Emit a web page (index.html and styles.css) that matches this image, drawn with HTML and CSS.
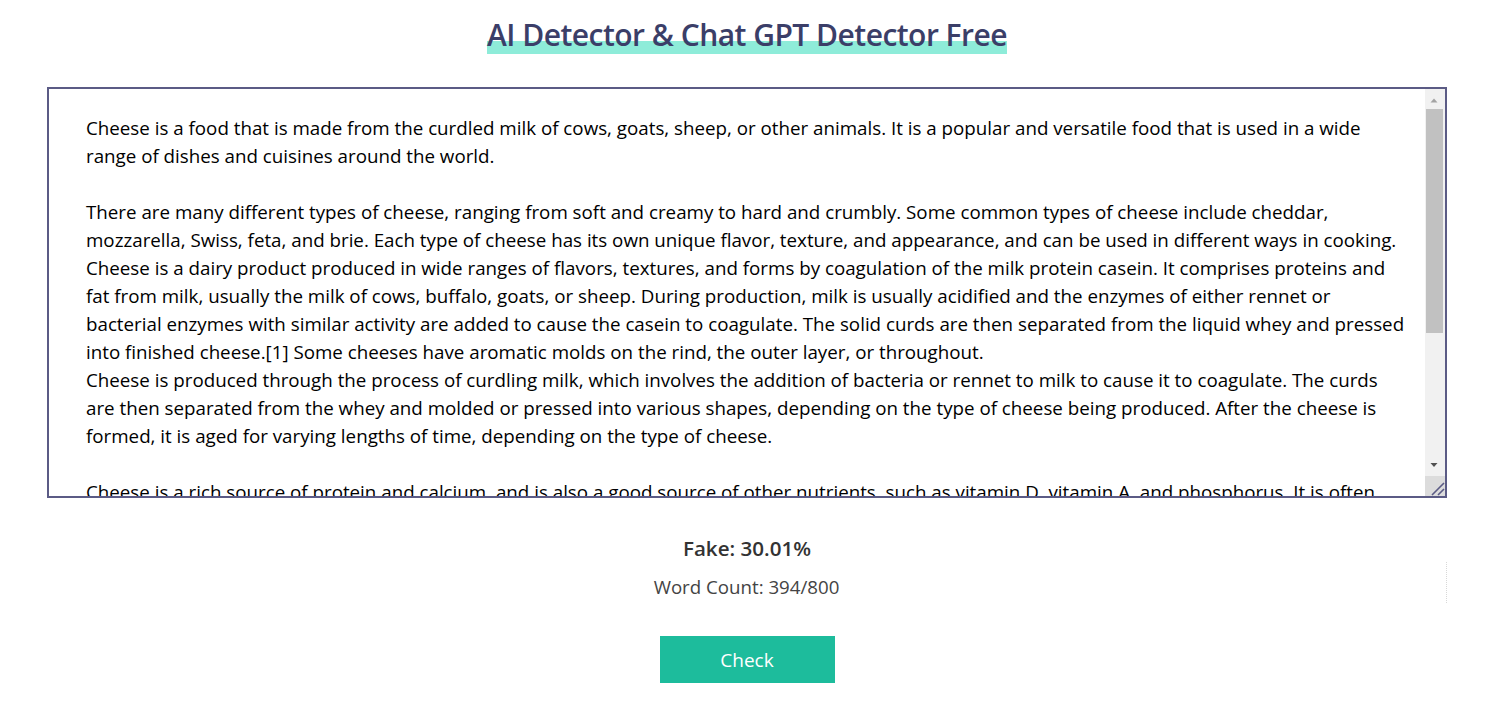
FILE: index.html
```html
<!DOCTYPE html>
<html lang="en">
<head>
<meta charset="utf-8">
<title>AI Detector &amp; Chat GPT Detector Free</title>
<link rel="stylesheet" href="styles.css">
</head>
<body>
<main class="page">
  <h1 class="title"><span class="title-mark">AI Detector &amp; Chat GPT Detector Free</span></h1>
  <div class="editor">
    <textarea class="input" spellcheck="false">Cheese is a food that is made from the curdled milk of cows, goats, sheep, or other animals. It is a popular and versatile food that is used in a wide range of dishes and cuisines around the world.

There are many different types of cheese, ranging from soft and creamy to hard and crumbly. Some common types of cheese include cheddar, mozzarella, Swiss, feta, and brie. Each type of cheese has its own unique flavor, texture, and appearance, and can be used in different ways in cooking.
Cheese is a dairy product produced in wide ranges of flavors, textures, and forms by coagulation of the milk protein casein. It comprises proteins and fat from milk, usually the milk of cows, buffalo, goats, or sheep. During production, milk is usually acidified and the enzymes of either rennet or bacterial enzymes with similar activity are added to cause the casein to coagulate. The solid curds are then separated from the liquid whey and pressed into finished cheese.[1] Some cheeses have aromatic molds on the rind, the outer layer, or throughout.
Cheese is produced through the process of curdling milk, which involves the addition of bacteria or rennet to milk to cause it to coagulate. The curds are then separated from the whey and molded or pressed into various shapes, depending on the type of cheese being produced. After the cheese is formed, it is aged for varying lengths of time, depending on the type of cheese.

Cheese is a rich source of protein and calcium, and is also a good source of other nutrients, such as vitamin D, vitamin A, and phosphorus. It is often used as a topping or ingredient in many dishes, including pizza, pasta, sandwiches, and salads, and it can also be enjoyed on its own, paired with crackers, fruit, or wine.

There are many ways to enjoy cheese, and it can be a delicious and nutritious addition to a balanced diet. However, it is important to consume cheese in moderation, as it can be high in saturated fat and sodium.

Overall, cheese is a delicious and versatile food that is enjoyed by people all over the world.</textarea>
    <div class="scrollbar" aria-hidden="true">
      <div class="sb-btn">
        <svg width="20" height="20" viewBox="0 0 20 20"><polygon points="5.5,13.5 9,9.5 12.5,13.5" fill="#a3a3a3"/></svg>
      </div>
      <div class="sb-track"><div class="sb-thumb"></div></div>
      <div class="sb-btn">
        <svg width="20" height="20" viewBox="0 0 20 20"><polygon points="5.5,7 12.5,7 9,11" fill="#505050"/></svg>
      </div>
      <div class="sb-corner">
        <svg width="20" height="20" viewBox="0 0 20 20"><path d="M7 19 L19 7 M13 19 L19 13" stroke="#5b5b85" stroke-width="1.6" fill="none"/></svg>
      </div>
    </div>
  </div>
  <section class="result">
    <p class="score">Fake: 30.01%</p>
    <div class="count-row"><p class="count">Word Count: 394/800</p></div>
    <button class="check" type="button">Check</button>
  </section>
</main>
</body>
</html>
```
FILE: styles.css
```css
html, body {
  margin: 0;
  padding: 0;
  background: #fff;
}
body {
  font-family: "Open Sans", "Liberation Sans", sans-serif;
  color: #000;
}
.page {
  width: 1400px;
  margin-left: calc(50% - 702px);
  padding-top: 14px;
  display: flex;
  flex-direction: column;
  align-items: center;
}
.title {
  margin: 0 0 31px;
  font-size: 30px;
  font-weight: 600;
  letter-spacing: -0.52px;
  line-height: 42px;
  color: #3b3e68;
}
.title-mark {
  background: linear-gradient(to bottom, transparent 0, transparent 66%, #8eecd9 66%, #8eecd9 97%, transparent 97%);
}
.editor {
  position: relative;
  width: 1400px;
  height: 411px;
}
.input {
  box-sizing: border-box;
  width: 100%;
  height: 100%;
  border: 2px solid #5b5b85;
  border-radius: 0;
  padding: 25px 35px 25px 37px;
  font-family: "Open Sans", "Liberation Sans", sans-serif;
  font-size: 18.75px;
  line-height: 28px;
  color: #000;
  outline: none;
  resize: none;
  margin: 0;
  display: block;
  scrollbar-width: none;
}
.input::-webkit-scrollbar {
  display: none;
}
.scrollbar {
  position: absolute;
  top: 2px;
  right: 2px;
  bottom: 2px;
  width: 20px;
  display: flex;
  flex-direction: column;
  background: #f1f1f1;
}
.sb-btn,
.sb-corner {
  height: 20px;
  flex: none;
}
.sb-btn svg,
.sb-corner svg {
  display: block;
}
.sb-track {
  flex: 1;
  display: flex;
  flex-direction: column;
}
.sb-thumb {
  height: 224px;
  margin: 0 2px 0 1px;
  background: #c1c1c1;
}
.sb-corner {
  background: #dcdcdc;
}
.result {
  width: 1400px;
  display: flex;
  flex-direction: column;
  align-items: center;
}
.score {
  margin: 36px 0 0;
  font-size: 20.6px;
  font-weight: 600;
  line-height: 28px;
  color: #333;
}
.count-row {
  width: 100%;
  display: flex;
  justify-content: center;
  border-right: 1px dotted #d8d8d8;
  box-sizing: border-box;
  padding: 11px 0 2px;
}
.count {
  margin: 0;
  font-size: 18.7px;
  line-height: 28px;
  color: #444;
}
.check {
  margin-top: 33px;
  width: 175px;
  height: 47px;
  border: none;
  border-radius: 0;
  background: #1dbc9c;
  color: #fff;
  font-family: "Open Sans", "Liberation Sans", sans-serif;
  font-size: 19px;
  cursor: pointer;
}
```
